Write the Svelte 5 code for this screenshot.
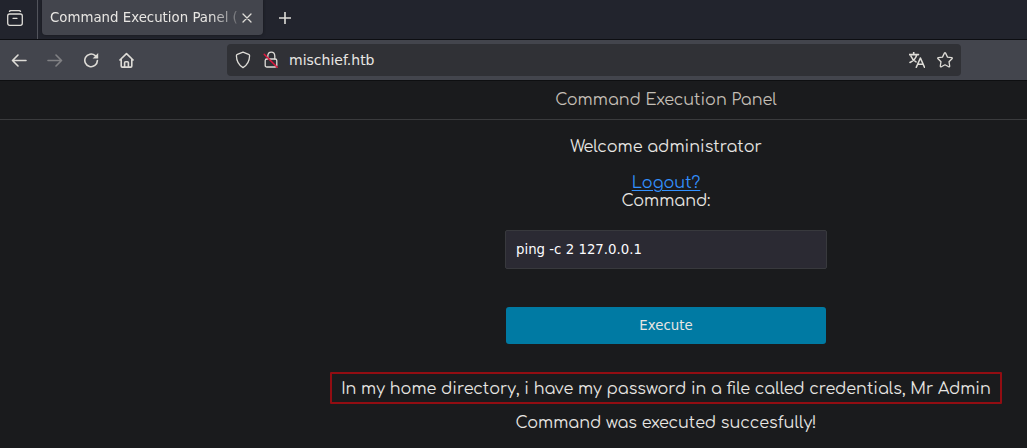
<script>
  let command = $state('ping -c 2 127.0.0.1');
</script>

<div class="window">
  <div class="tabs">
    <button class="view" aria-label="Firefox View">
      <svg width="16" height="16" viewBox="0 0 16 16">
        <path d="M2.5 1.4Q3 .6 4 .6h8q1 0 1.5.8" />
        <rect x=".7" y="4" width="14.6" height="11.3" rx="2" />
        <path d="M6 8.3h4" />
      </svg>
    </button>
    <div class="tab">
      <button class="title">Command Execution Panel (</button>
      <button class="close" aria-label="Close tab">
        <svg width="10" height="10" viewBox="0 0 10 10"><path d="M1 1l8 8M9 1L1 9" /></svg>
      </button>
    </div>
    <button class="new" aria-label="New tab">
      <svg width="12" height="12" viewBox="0 0 12 12"><path class="bold" d="M6 0v12M0 6h12" /></svg>
    </button>
  </div>

  <nav class="toolbar" aria-label="Navigation">
    <div class="history">
      <button aria-label="Back">
        <svg width="16" height="16" viewBox="0 0 16 16"><path class="bold" d="M15 8.5H2M7 3L1.5 8.5 7 14" /></svg>
      </button>
      <button aria-label="Forward" disabled>
        <svg width="16" height="16" viewBox="0 0 16 16"><path class="bold" d="M1 8.5h13M9 3l5.5 5.5L9 14" /></svg>
      </button>
      <button aria-label="Reload">
        <svg width="16" height="16" viewBox="0 0 16 16">
          <path class="bold" d="M14.4 8.6A6.3 6.3 0 1 1 12.2 3.6" />
          <path class="fill" d="M15.2 1v5.4H9.6z" />
        </svg>
      </button>
      <button aria-label="Home">
        <svg width="16" height="16" viewBox="0 0 16 16">
          <path class="bold" d="M.9 8L7.5 1.6 14.1 8M2.2 6.9V14q0 1.1 1.1 1.1h8.4q1.1 0 1.1-1.1V6.9M5.6 15v-4.2q0-1.1 1-1.1h1.8q1 0 1 1.1V15" />
        </svg>
      </button>
    </div>
    <div class="address">
      <svg width="16" height="18" viewBox="0 0 16 18">
        <path d="M8 1.2l5.6 2.1q1 .4 1 1.4Q14.4 12.8 8 16.6 1.6 12.8 1.4 4.7q0-1 1-1.4z" />
      </svg>
      <svg width="16" height="18" viewBox="0 0 16 18">
        <path d="M4.8 8V5Q5 1.2 8.3 1.2T11.8 5v3" />
        <path d="M6.5 8H12q1.8 0 1.8 1.6v4.8q0 1.6-1.8 1.6H4q-1.8 0-1.8-1.6V9.6Q2.2 8 4 8" />
        <path class="slash" d="M1.2 3.2l13 13" />
      </svg>
      <input class="url" aria-label="Address" value="mischief.htb" />
      <svg width="16" height="16" viewBox="0 0 16 16">
        <path class="bold" d="M0 2.6h9.5M4.7.3v2M7.7 2.8Q6.7 7.5 1 10.5M2 4.2q1.7 4 5 5.7M7.3 15.3L11.4 6l4.1 9.3M8.8 12.2H14" />
      </svg>
      <svg width="16" height="16" viewBox="0 0 16 16">
        <path d="M7.4 1.1q.6-.9 1.2 0l1.9 4 4.1.5q1.1.3.4 1.1l-3 3 .7 4.3q0 1.2-1 .8L8 12.8l-3.7 2q-1 .4-1-.8L4 9.7l-3-3q-.7-.8.4-1.1l4.1-.5z" />
      </svg>
    </div>
  </nav>

  <header>Command Execution Panel</header>

  <main>
    <p>Welcome administrator</p>
    <a href="#logout">Logout?</a>
    <form onsubmit={(e) => e.preventDefault()}>
      <label for="command">Command:</label>
      <input id="command" bind:value={command} />
      <button type="submit">Execute</button>
    </form>
    <p class="output">In my home directory, i have my password in a file called credentials, Mr Admin</p>
    <p class="status">Command was executed succesfully!</p>
  </main>
</div>

<style>
  :global(body) {
    margin: 0;
    background: #1a1b1d;
  }
  * {
    box-sizing: border-box;
  }
  .window {
    font: 16px/18px Comfortaa, Quicksand, Lato, sans-serif;
    color: #e8e6e3;
  }
  button,
  input {
    font-family: "DejaVu Sans", sans-serif;
    line-height: 20px;
    color: inherit;
    border: 0;
    padding: 0;
    background: none;
  }
  svg {
    display: block;
    flex: none;
    fill: none;
    stroke: #dedcd7;
    stroke-width: 1.3;
    stroke-linecap: round;
    stroke-linejoin: round;
  }
  .bold {
    stroke-width: 1.6;
  }
  .fill {
    fill: #dedcd7;
    stroke: none;
  }
  .tabs {
    display: flex;
    height: 40px;
    background: #22242d;
    border-bottom: 1px solid #0d0e12;
  }
  .view {
    width: 38px;
    padding-left: 7px;
    padding-bottom: 4px;
    border-right: 1px solid #52545c;
  }
  .tab {
    display: flex;
    align-items: center;
    width: 221px;
    height: 35px;
    margin-left: 4px;
    padding: 0 11px 0 8px;
    background: #43454d;
    border-radius: 0 0 4px 4px;
    box-shadow: 0 0 3px #15161b;
  }
  .title {
    flex: 1;
    overflow: hidden;
    text-align: left;
    white-space: nowrap;
    mask-image: linear-gradient(to right, #000 84%, transparent 104%);
  }
  .close {
    margin-left: 2px;
  }
  .new {
    padding: 0 15px 4px 16px;
  }
  .toolbar {
    display: flex;
    align-items: center;
    height: 41px;
    padding-right: 66px;
    background: #43454d;
    border-bottom: 1px solid #0e0f11;
  }
  .history {
    display: flex;
    gap: 20px;
    width: 227px;
    padding-left: 11px;
  }
  .history button:disabled {
    opacity: 0.4;
  }
  .address {
    display: flex;
    flex: 1;
    align-items: center;
    gap: 12px;
    height: 32px;
    padding: 0 8px;
    background: #303136;
    border-radius: 4px;
  }
  .slash {
    stroke: #e3173f;
    stroke-width: 1.5;
  }
  .url {
    flex: 1;
    min-width: 0;
    margin-left: -2px;
    font-size: 14px;
  }
  header {
    padding: 10px 0 10px 305px;
    text-align: center;
    color: #c4bfb6;
    border-bottom: 1px solid #3a3b3d;
  }
  main {
    display: flex;
    flex-direction: column;
    align-items: center;
    padding: 18px 0 16px 305px;
  }
  p {
    margin: 0;
  }
  a {
    margin-top: 18px;
    color: #3391ff;
    text-underline-offset: 2px;
  }
  form {
    display: flex;
    flex-direction: column;
    width: 100%;
    max-width: 322px;
    text-align: center;
  }
  form input {
    height: 39px;
    margin-top: 20px;
    padding: 0 10px;
    color: #fbfbfe;
    background: #2b2a33;
    border: 1px solid #38393d;
    border-radius: 2px;
  }
  form button {
    height: 37px;
    margin: 38px 1px 28px;
    background: #007aa3;
    border-radius: 3px;
  }
  .output {
    padding: 6px 9px 4px;
    border: 2px solid #920d12;
    border-radius: 1px;
  }
  .status {
    margin-top: 10px;
  }
</style>
